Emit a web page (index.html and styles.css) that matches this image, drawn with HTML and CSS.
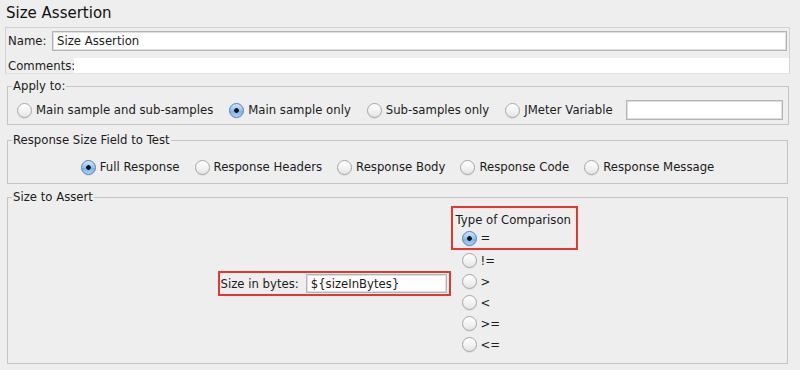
FILE: index.html
```html
<!DOCTYPE html>
<html lang="en">
<head>
  <meta charset="UTF-8">
  <title>Size Assertion</title>
  <link rel="stylesheet" href="styles.css">
</head>
<body>
  <h1 class="title">Size Assertion</h1>

  <!-- Name / comments -->
  <div class="name-panel">
    <div class="name-row">
      <label class="name-label" for="name">Name:</label>
      <input class="text-field name-field" id="name" type="text" value="Size Assertion">
    </div>
    <div class="comments-row">
      <label class="comments-label" for="comments">Comments:</label>
      <div class="comments-field" id="comments"></div>
    </div>
  </div>

  <!-- Apply to -->
  <fieldset class="group group-apply">
    <legend>Apply to:</legend>
    <div class="radio-row">
      <label class="radio"><input type="radio" name="apply"><span>Main sample and sub-samples</span></label>
      <label class="radio"><input type="radio" name="apply" checked><span>Main sample only</span></label>
      <label class="radio"><input type="radio" name="apply"><span>Sub-samples only</span></label>
      <label class="radio"><input type="radio" name="apply"><span>JMeter Variable</span></label>
      <input class="text-field var-field" type="text">
    </div>
  </fieldset>

  <!-- Response field -->
  <fieldset class="group group-field">
    <legend>Response Size Field to Test</legend>
    <div class="radio-row centered">
      <label class="radio"><input type="radio" name="field" checked><span>Full Response</span></label>
      <label class="radio"><input type="radio" name="field"><span>Response Headers</span></label>
      <label class="radio"><input type="radio" name="field"><span>Response Body</span></label>
      <label class="radio"><input type="radio" name="field"><span>Response Code</span></label>
      <label class="radio"><input type="radio" name="field"><span>Response Message</span></label>
    </div>
  </fieldset>

  <!-- Size to assert -->
  <fieldset class="group group-size">
    <legend>Size to Assert</legend>
    <div class="size-body">
      <div class="size-box highlight">
        <label for="size">Size in bytes:</label>
        <input class="text-field size-field" id="size" type="text" value="${sizeInBytes}">
      </div>
      <div class="compare">
        <div class="compare-head highlight">
          <div class="compare-title">Type of Comparison</div>
          <label class="radio compare-item"><input type="radio" name="cmp" checked><span>=</span></label>
        </div>
        <label class="radio compare-item"><input type="radio" name="cmp"><span>!=</span></label>
        <label class="radio compare-item"><input type="radio" name="cmp"><span>&gt;</span></label>
        <label class="radio compare-item"><input type="radio" name="cmp"><span>&lt;</span></label>
        <label class="radio compare-item"><input type="radio" name="cmp"><span>&gt;=</span></label>
        <label class="radio compare-item"><input type="radio" name="cmp"><span>&lt;=</span></label>
      </div>
    </div>
  </fieldset>
</body>
</html>
```

FILE: styles.css
```css
* {
  box-sizing: border-box;
}

body {
  margin: 0;
  background: #eeeeee;
  color: #1c1c1c;
  font-family: "DejaVu Sans", sans-serif;
  font-size: 11.7px;
  line-height: 14px;
}

.title {
  margin: 0;
  padding: 3px 6px 4px;
  font-size: 15px;
  font-weight: normal;
  line-height: 20px;
  color: #111;
}

/* text inputs */
.text-field {
  min-width: 0;
  height: 20px;
  padding: 0 4px;
  border: 1px solid #b4b4b4;
  box-shadow: inset 0 0 0 1px #dedede;
  background: #fff;
  font: inherit;
  color: #1c1c1c;
  outline: none;
}

/* name panel */
.name-panel {
  width: 785px;
  margin-left: 5px;
  border: 1px solid #d2d2d2;
  border-bottom-color: #e2e2e2;
  padding-top: 3px;
}

.name-row {
  display: flex;
  align-items: center;
}

.name-label {
  width: 46px;
  padding-left: 2px;
}

.name-field {
  flex: 1;
  margin-right: 2px;
}

.comments-row {
  display: flex;
  align-items: center;
  margin-top: 7px;
  height: 15px;
}

.comments-label {
  width: 68px;
  padding-left: 2px;
}

.comments-field {
  flex: 1;
  height: 15px;
  background: #fff;
}

/* titled groups */
.group {
  width: 781px;
  margin: 5px 0 0 7px;
  padding: 0 4px;
  border: 1px solid #c4c4c4;
}

.group legend {
  padding: 0 1px;
  line-height: 14px;
}

.group-field {
  margin-top: 8px;
}

.group-size {
  margin-top: 6px;
}

.radio-row {
  display: flex;
  align-items: center;
  gap: 16px;
  height: 20px;
}

.group-apply .radio-row {
  margin: 7px 1px 4px 5px;
}

.group-field .radio-row {
  margin: 10px 0 6px;
}

.radio-row.centered {
  justify-content: center;
  gap: 15px;
}

.radio {
  display: flex;
  align-items: center;
  white-space: nowrap;
}

.radio input {
  appearance: none;
  -webkit-appearance: none;
  flex: none;
  width: 15px;
  height: 15px;
  margin: 0 4px 0 0;
  border: 1px solid #a6a6a6;
  border-radius: 50%;
  background: linear-gradient(#ffffff, #f2f2f2 55%, #e4e4e4);
  box-shadow: 0 1px 0 rgba(0, 0, 0, 0.06);
}

.radio input:checked {
  border-color: #5b7fae;
  background: radial-gradient(circle, #111 0 2px, transparent 2.6px),
    linear-gradient(#cfe6fb, #8ec2f2 50%, #6fb0ee 51%, #a9d3f7);
}

.var-field {
  flex: 1;
  margin-left: -3px;
  height: 20px;
}

/* size to assert */
.size-body {
  display: flex;
  justify-content: center;
  align-items: center;
  padding: 2px 0 8px;
}

.highlight {
  border: 2px solid #e4382f;
}

.size-box {
  display: flex;
  align-items: center;
  width: 233px;
  height: 25px;
  margin-top: 6px;
  padding: 0 2px 0 1px;
}

.size-box label {
  margin-right: 7px;
  white-space: nowrap;
}

.size-field {
  flex: 1;
  width: 0;
  height: 19px;
}

.compare {
  width: 127px;
}

.compare-head {
  padding: 4px 0 0 3px;
  height: 44px;
}

.compare-title {
  line-height: 16px;
  white-space: nowrap;
}

.compare-item {
  height: 21px;
  margin-left: 11px;
}

.compare-head .compare-item {
  height: 20px;
  margin-left: 6px;
}
```
